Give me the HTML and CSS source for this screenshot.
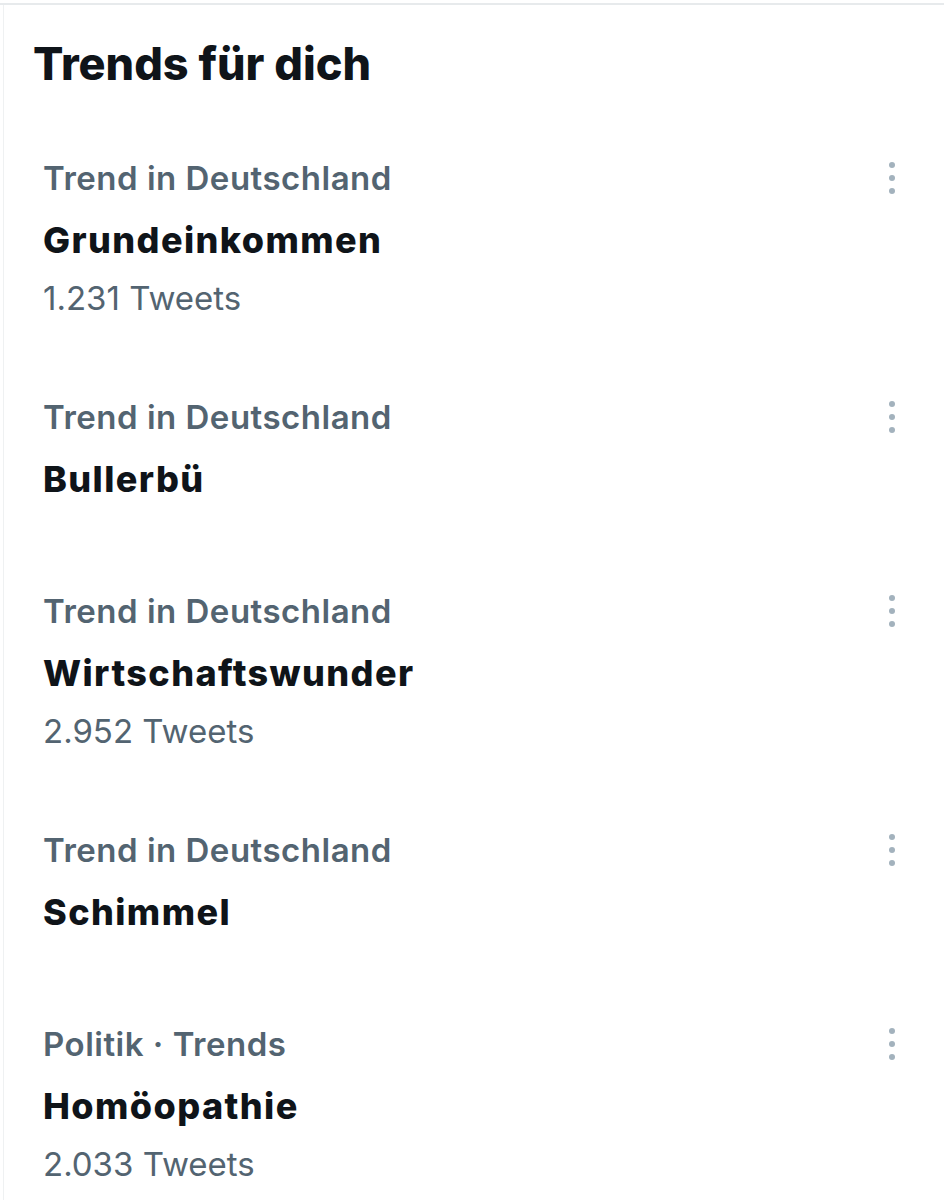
FILE: index.html
```html
<!DOCTYPE html>
<html lang="de">
<head>
<meta charset="utf-8">
<title>Trends für dich</title>
<link rel="stylesheet" href="styles.css">
</head>
<body>
<div class="frame">
  <section class="panel">
    <h2 class="heading">Trends für dich</h2>
    <div class="trend">
      <div class="info">
        <div class="cat">Trend in Deutschland</div>
        <div class="title">Grundeinkommen</div>
        <div class="count">1.231 Tweets</div>
      </div>
      <svg class="more" width="12" height="38" viewBox="0 0 12 38"><circle cx="6" cy="5" r="3"/><circle cx="6" cy="18" r="3"/><circle cx="6" cy="31" r="3"/></svg>
    </div>
    <div class="trend">
      <div class="info">
        <div class="cat">Trend in Deutschland</div>
        <div class="title">Bullerbü</div>
      </div>
      <svg class="more" width="12" height="38" viewBox="0 0 12 38"><circle cx="6" cy="5" r="3"/><circle cx="6" cy="18" r="3"/><circle cx="6" cy="31" r="3"/></svg>
    </div>
    <div class="trend">
      <div class="info">
        <div class="cat">Trend in Deutschland</div>
        <div class="title">Wirtschaftswunder</div>
        <div class="count">2.952 Tweets</div>
      </div>
      <svg class="more" width="12" height="38" viewBox="0 0 12 38"><circle cx="6" cy="5" r="3"/><circle cx="6" cy="18" r="3"/><circle cx="6" cy="31" r="3"/></svg>
    </div>
    <div class="trend">
      <div class="info">
        <div class="cat">Trend in Deutschland</div>
        <div class="title">Schimmel</div>
      </div>
      <svg class="more" width="12" height="38" viewBox="0 0 12 38"><circle cx="6" cy="5" r="3"/><circle cx="6" cy="18" r="3"/><circle cx="6" cy="31" r="3"/></svg>
    </div>
    <div class="trend">
      <div class="info">
        <div class="cat">Politik · Trends</div>
        <div class="title">Homöopathie</div>
        <div class="count">2.033 Tweets</div>
      </div>
      <svg class="more" width="12" height="38" viewBox="0 0 12 38"><circle cx="6" cy="5" r="3"/><circle cx="6" cy="18" r="3"/><circle cx="6" cy="31" r="3"/></svg>
    </div>
  </section>
</div>
</body>
</html>
```

FILE: styles.css
```css
html, body {
  margin: 0;
  padding: 0;
  background: #ffffff;
}

body {
  font-family: Inter, "Noto Sans", sans-serif;
  color: #0f1419;
}

.frame {
  margin-top: 3px;
  border-top: 2px solid #e7eaec;
}

.panel {
  margin-left: 3px;
  border-left: 1px solid #eff1f2;
  padding: 0 0 0 29px;
  min-height: 1195px;
}

.heading {
  margin: 0;
  padding-top: 31px;
  font-size: 45px;
  line-height: 56px;
  font-weight: 800;
}

.trend {
  display: flex;
  align-items: flex-start;
  padding: 66px 46px 13px 10px;
}

.info {
  flex: 1;
}

.cat,
.title,
.count {
  line-height: 40px;
}

.cat {
  font-size: 33px;
  letter-spacing: 0.5px;
  color: #536471;
  font-weight: 600;
}

.title {
  margin-top: 22px;
  margin-bottom: 13px;
  font-size: 36px;
  letter-spacing: 1.4px;
  font-weight: 800;
}

.count {
  margin-top: 18px;
  font-size: 33px;
  color: #536471;
  font-weight: 400;
}

.more {
  fill: #a3b2bd;
  margin-top: 2px;
}
```
